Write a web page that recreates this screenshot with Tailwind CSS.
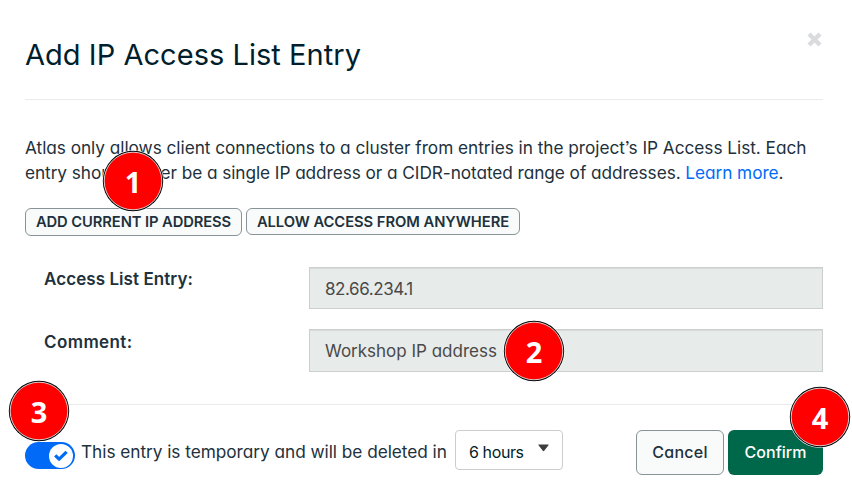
<!DOCTYPE html>
<html lang="en">
<head>
<meta charset="utf-8">
<title>Add IP Access List Entry</title>
<script src="https://cdn.jsdelivr.net/npm/@tailwindcss/browser@4"></script>
</head>
<body class="bg-white">
<main class="relative flex h-[499px] w-[852px] flex-col overflow-hidden bg-white pl-[25px] pr-[29px] font-['Inter','Liberation_Sans',sans-serif] text-[#21313c] [font-feature-settings:'cv11','ss03']">
  <header class="flex h-[100px] shrink-0 items-start justify-between border-b border-[#ebebeb]">
    <h1 class="mt-[35px] whitespace-nowrap text-[29px] leading-10 tracking-[0.04px] text-[#001e2b]">Add IP Access List Entry</h1>
    <button class="mt-8 mr-[1px]" aria-label="Close"><svg class="block" width="15" height="15" viewBox="0 0 15 15" fill="none" stroke="#d9dbde" stroke-width="4.4"><path d="M2 2 13 13M13 2 2 13"/></svg></button>
  </header>

  <p class="mt-[35px] h-[50px] whitespace-nowrap text-[17.25px] leading-[25px]"><span class="tracking-[-0.04px]">Atlas only allows client connections to a cluster from entries in the project’s IP Access List. Each</span><br><span class="tracking-[-0.072px]">entry should either be a single IP address or a CIDR-notated range of addresses. <a class="text-[#016bf8]">Learn more</a>.</span></p>

  <div class="mt-[23px] flex h-7 items-start gap-1 whitespace-nowrap text-[14.75px] font-semibold leading-[26px]">
    <button class="h-7 w-[217px] rounded-md border border-[#889397] bg-[#f9fbfa] tracking-[-0.1px]">ADD CURRENT IP ADDRESS</button>
    <button class="h-[27px] w-[274px] rounded-md border border-[#889397] bg-[#f9fbfa] tracking-[-0.05px]">ALLOW ACCESS FROM ANYWHERE</button>
  </div>

  <div class="mt-[31px] flex flex-col gap-5">
    <div class="flex h-[42px]">
      <label class="w-[284px] pl-[19px] text-[17px] font-semibold leading-6 tracking-[0.07px]">Access List Entry:</label>
      <div class="flex-1 border border-[#cccfce] bg-[#e7ebea] pl-[15px] text-[17px] leading-[42px] tracking-[-0.42px] text-[#494949] shadow-[inset_0_1px_1px_rgba(0,0,0,0.075)]">82.66.234.1</div>
    </div>
    <div class="flex h-[43px]">
      <label class="w-[284px] pl-[19px] text-[17px] font-semibold leading-[26px] tracking-[0.4px]">Comment:</label>
      <div class="flex-1 border border-[#cccfce] bg-[#e7ebea] pl-[15px] text-[17px] leading-[42px] text-[#494949] shadow-[inset_0_1px_1px_rgba(0,0,0,0.075)]">Workshop IP address</div>
    </div>
  </div>

  <footer class="mt-8 flex items-start border-t border-[#ebebeb] pt-[25px]">
    <div class="mt-3 flex h-[27px] w-[50px] shrink-0 items-center justify-end rounded-full bg-[#016bf8] pr-[2px]">
      <div class="flex size-6 items-center justify-center rounded-full bg-white">
        <svg width="14" height="12" viewBox="0 0 14 12" fill="none" stroke="#016bf8" stroke-width="3.2" stroke-linecap="butt" stroke-linejoin="round"><path d="M1.2 5.3 5.1 9.2 12.6 1.8"/></svg>
      </div>
    </div>
    <span class="ml-[6px] w-[374px] whitespace-nowrap text-[17.25px] leading-[44px] tracking-[-0.04px]">This entry is temporary and will be deleted in</span>
    <div class="flex h-10 w-[108px] shrink-0 justify-between rounded border border-[#cccccc] pl-[13px] pr-[13px]">
      <span class="whitespace-nowrap text-[16px] leading-[43px] tracking-[-0.4px] text-[#001e2b]">6 hours</span>
      <svg class="mt-[13px]" width="11" height="8" viewBox="0 0 11 8" fill="#3d3d3d"><path d="M0.8 0.5h9.4q0.8 0 0.3 0.8L6.2 6.7q-0.7 0.9-1.4 0L0.5 1.3Q0 0.5 0.8 0.5Z"/></svg>
    </div>
    <div class="ml-auto flex gap-1 text-[16px] font-medium">
      <button class="h-[45px] w-[88px] rounded-md border border-[#889397] bg-[#f9fbfa] pb-[2px] tracking-[0.25px]">Cancel</button>
      <button class="h-[45px] w-[95px] rounded-md bg-[#00684a] pb-[2px] text-white">Confirm</button>
    </div>
  </footer>

  <!-- Numbered step markers floating over the dialog -->
  <svg class="absolute inset-0" width="852" height="499" viewBox="0 0 852 499" font-family="'Open Sans','Noto Sans',sans-serif" font-weight="700" font-size="29" text-anchor="middle" fill="#fff">
    <g transform="translate(133 181)"><circle r="30.8"/><circle r="30.2" fill="#000"/><circle r="28.8" fill="red" stroke="#fff" stroke-width="0.8"/><text y="11.5">1</text></g>
    <g transform="translate(534 351)"><circle r="30.8"/><circle r="30.2" fill="#000"/><circle r="28.8" fill="red" stroke="#fff" stroke-width="0.8"/><text y="11.5">2</text></g>
    <g transform="translate(39 411)"><circle r="30.8"/><circle r="30.2" fill="#000"/><circle r="28.8" fill="red" stroke="#fff" stroke-width="0.8"/><text y="11.5">3</text></g>
    <g transform="translate(820 417)"><circle r="30.8"/><circle r="30.2" fill="#000"/><circle r="28.8" fill="red" stroke="#fff" stroke-width="0.8"/><text y="11.5">4</text></g>
  </svg>
</main>
</body>
</html>
